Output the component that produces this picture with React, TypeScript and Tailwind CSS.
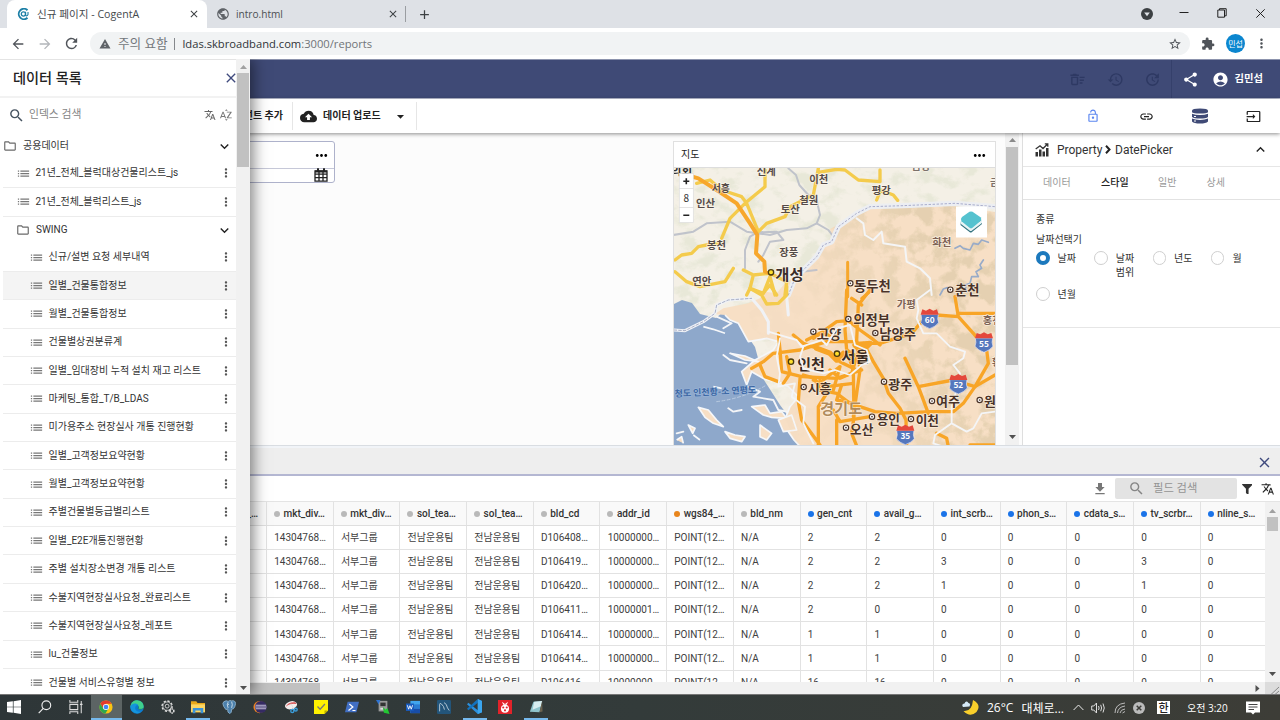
import React from 'react';
import {
  MdArrowBack, MdArrowForward, MdRefresh, MdWarning, MdStarBorder, MdExtension, MdMoreVert, MdPublic, MdClose, MdAdd,
  MdSearch, MdTranslate, MdSortByAlpha, MdList, MdExpandMore, MdExpandLess, MdOutlineFolder, MdCloudUpload, MdArrowDropDown,
  MdOutlineDeleteSweep, MdHistory, MdUpdate, MdShare, MdAccountCircle, MdLink, MdInput, MdMoreHoriz,
  MdGetApp, MdLockOpen,
} from 'react-icons/md';
import { FaFilter } from 'react-icons/fa';

const leaves = [
  '신규/설변 요청 세부내역', '일별_건물통합정보', '월별_건물통합정보', '건물별상권분류계', '일별_임대장비 누적 설치 재고 리스트',
  '마케팅_통합_T/B_LDAS', '미가용주소 현장실사 개통 진행현황', '일별_고객정보요약현황', '월별_고객정보요약현황', '주별건물별등급별리스트',
  '일별_E2E개통진행현황', '주별 설치장소변경 개통 리스트', '수불지역현장실사요청_완료리스트', '수불지역현장실사요청_레포트',
  'lu_건물정보', '건물별 서비스유형별 정보',
];

const columns: [string, string][] = [
  ['mkt_div…', 'g'], ['mkt_div…', 'g'], ['sol_tea…', 'g'], ['sol_tea…', 'g'], ['bld_cd', 'g'], ['addr_id', 'g'], ['wgs84_…', 'o'],
  ['bld_nm', 'g'], ['gen_cnt', 'b'], ['avail_g…', 'b'], ['int_scrb…', 'b'], ['phon_s…', 'b'], ['cdata_s…', 'b'], ['tv_scrbr…', 'b'], ['nline_s…', 'b'],
];
const dot: Record<string, string> = { g: 'bg-[#b9b9b9]', o: 'bg-[#e8851c]', b: 'bg-[#1a73e8]' };

const row = (bld: string, addr: string, ...n: string[]) => ['14304768…', '서부그룹', '전남운용팀', '전남운용팀', bld, addr, 'POINT(12…', 'N/A', ...n];
const rows = [
  row('D106408…', '10000000…', '2', '2', '0', '0', '0', '0', '0'),
  row('D106419…', '10000000…', '2', '2', '3', '0', '0', '3', '0'),
  row('D106420…', '10000000…', '2', '2', '1', '0', '0', '1', '0'),
  row('D106411…', '10000001…', '2', '0', '0', '0', '0', '0', '0'),
  row('D106414…', '10000000…', '1', '1', '0', '0', '0', '0', '0'),
  row('D106414…', '10000000…', '1', '1', '0', '0', '0', '0', '0'),
  row('D106416…', '10000000…', '16', '16', '0', '0', '0', '0', '0'),
];

function Tri({ d, c = 'text-[#505050]' }: { d: 'up' | 'down' | 'right'; c?: string }) {
  const p = { up: 'M0 4 L3.5 0 L7 4Z', down: 'M0 0 H7 L3.5 4Z', right: 'M1.5 0 V7 L5.5 3.5Z' }[d];
  return <svg className={`block shrink-0 ${c}`} width="7" height={d === 'right' ? 7 : 4} viewBox={d === 'right' ? '0 0 7 7' : '0 0 7 4'}><path d={p} fill="currentColor" /></svg>;
}

function Browser() {
  return (
    <div className="shrink-0 font-['Open_Sans','Noto_Sans_CJK_KR',sans-serif]">
      <div className="flex h-7 bg-[#dee1e6]">
        <div className="ml-[7px] flex w-[200px] items-center rounded-t-lg bg-white pl-[10px]">
          <svg width="12" height="12" viewBox="0 0 12 12" fill="none" stroke="#1c7fa6">
            <path d="M10.5 2.2A5.2 5.2 0 1 0 10.5 9.8" strokeWidth="1.9" />
            <circle cx="6.4" cy="6" r="2.1" strokeWidth="1.3" /><path d="M8.6 3.8V7.4Q10 8.6 11 6.5V4" strokeWidth="1.1" />
          </svg>
          <span className="ml-[8px] whitespace-nowrap text-[10.6px] leading-none text-[#45494d]">신규 페이지 - CogentA</span>
          <MdClose className="ml-auto mr-[7px] size-[12px] text-[#3c4043]" />
        </div>
        <div className="flex w-[198px] items-center pl-[9px]">
          <MdPublic className="size-[14px] text-[#5f6368]" />
          <span className="ml-[6px] text-[10.1px] leading-none text-[#4c5054]">intro.html</span>
          <MdClose className="ml-auto mr-[6px] size-[12px] text-[#3c4043]" />
        </div>
        <div className="mt-[6px] h-4 w-px bg-[#9a9da1]" />
        <MdAdd className="ml-[11px] mt-[7px] size-[15px] text-[#3c4043]" />
        <div className="ml-auto flex items-center">
          <svg className="mr-[26px]" width="12" height="12" viewBox="0 0 12 12"><circle cx="6" cy="6" r="6" fill="#3c4043" /><path d="M3.2 4.5H8.8L6 8.3Z" fill="#dee1e6" /></svg>
          <svg className="mr-[28px]" width="10" height="12" viewBox="0 0 10 12"><path d="M.5 4.5H9.5" stroke="#222" /></svg>
          <svg className="-mt-[2px] mr-[29px]" width="10" height="10" viewBox="0 0 10 10" fill="none" stroke="#222"><path d="M.8 2H7.5V9.2H.8ZM2.5 2V.7H9.2V7.8H7.5" /></svg>
          <svg className="-mt-[2px] mr-[15px]" width="9" height="9" viewBox="0 0 9 9"><path d="M.3.3L8.7 8.7M8.7.3L.3 8.7" stroke="#222" /></svg>
        </div>
      </div>
      <div className="flex h-[31px] items-center bg-white">
        <MdArrowBack className="ml-[10px] size-[16px] text-[#50545a]" />
        <MdArrowForward className="ml-[11px] size-[16px] text-[#b3b6ba]" />
        <MdRefresh className="ml-[10px] size-[17px] text-[#50545a]" />
        <div className="ml-[10px] flex h-[23px] w-[1100px] items-center rounded-full bg-[#f1f3f4] pl-[9px]">
          <MdWarning className="size-[12px] text-[#5f6368]" />
          <span className="ml-[7px] mt-[2px] w-[51px] whitespace-nowrap text-[12.6px] leading-none text-[#73777b]">주의 요함</span>
          <div className="ml-[5px] mr-[7.5px] h-3 w-px bg-[#85888c]" />
          <span className="whitespace-nowrap text-[11.2px] leading-none text-[#707478]"><span className="text-[#303338]">ldas.skbroadband.com</span>:3000/reports</span>
          <MdStarBorder className="ml-auto mr-[8px] size-[14px] text-[#50545a]" />
        </div>
        <MdExtension className="ml-[11px] size-[14px] text-[#50545a]" />
        <div className="ml-[11px] flex size-[19px] items-center justify-center rounded-full bg-[#0b86cf] text-[8px] leading-none text-white">민섭</div>
        <MdMoreVert className="ml-[9px] size-[15px] text-[#50545a]" />
      </div>
    </div>
  );
}

function Leaf({ text, indent, active = false }: { text: string; indent: string; active?: boolean }) {
  return (
    <div className={`ml-[3px] flex h-[28.37px] shrink-0 items-center border-b border-[#ececec] ${indent} ${active ? 'bg-[#f4f4f4]' : ''}`}>
      <MdList className="size-[15px] text-[#777]" />
      <span className="ml-[4.5px] whitespace-nowrap text-[10px] leading-none text-[#333]">{text}</span>
      <MdMoreVert className="ml-auto mr-[3px] size-[14px] text-[#555]" />
    </div>
  );
}

function Folder({ text, indent }: { text: string; indent: string }) {
  return (
    <div className={`flex h-[27px] shrink-0 items-center ${indent}`}>
      <MdOutlineFolder className="size-[14px] text-[#6a6a6a]" />
      <span className="ml-[6px] text-[10px] leading-none text-[#333]">{text}</span>
      <MdExpandMore className="ml-auto mr-[3px] size-[17px] text-[#222]" />
    </div>
  );
}

function Drawer() {
  return (
    <aside className="absolute inset-y-0 left-0 z-20 flex w-[250px] bg-white shadow-[3px_0_14px_rgba(0,0,0,0.5)]">
      <div className="flex w-[236px] flex-col overflow-hidden border-t border-[#e4e4e4]">
        <div className="flex h-[38px] shrink-0 items-center border-b-2 border-[#f2f2f2] pl-[13px]">
          <span className="whitespace-nowrap text-[14.2px] font-medium leading-none text-[#222]">데이터 목록</span>
          <MdClose className="-mr-[3px] ml-auto size-[16px] shrink-0 text-[#3f4a7d]" />
        </div>
        <div className="flex h-[34.8px] shrink-0 items-center pl-[8px]">
          <MdSearch className="size-[17px] text-[#45525f]" />
          <span className="ml-[4px] text-[10.8px] leading-none text-[#858585]">인덱스 검색</span>
          <MdTranslate className="ml-auto size-[12px] text-[#666]" />
          <MdSortByAlpha className="ml-[3px] mr-[3px] size-[14px] text-[#777]" />
        </div>
        <Folder text="공용데이터" indent="pl-[3px]" />
        <Leaf text="21년_전체_블럭대상건물리스트_js" indent="pl-[13px]" />
        <Leaf text="21년_전체_블럭리스트_js" indent="pl-[13px]" />
        <Folder text="SWING" indent="pl-[16px]" />
        {leaves.map((t, i) => <Leaf key={t} text={t} indent="pl-[26px]" active={i === 1} />)}
      </div>
      <div className="flex w-[14px] flex-col items-center bg-[#f1f1f1] pb-[4px] pt-[6px]">
        <Tri d="up" c="text-[#a0a0a0]" />
        <div className="mt-[4px] h-[94px] w-[12px] bg-[#c1c1c1]" />
        <div className="mt-auto"><Tri d="down" /></div>
      </div>
    </aside>
  );
}

function Shield({ x, y, n }: { x: number; y: number; n: string }) {
  return (
    <g transform={`translate(${x} ${y})`}>
      <path d="M-26 -10H26Q22 4 27 15Q18 27 0 33Q-18 27 -27 15Q-22 4 -26 -10Z" fill="#5577bd" stroke="#e8e8f4" strokeWidth="2" />
      <path d="M-27 -9L-22 -25L-11 -21L0 -27L11 -21L22 -25L27 -9Z" fill="#e4483c" />
      <text x="0" y="16" textAnchor="middle" fontSize="25" fill="#fff" fontWeight="600">{n}</text>
    </g>
  );
}

const upperLabels: [number, number, string, number, string][] = [
  [2, 121, '의회', 35, '#333'], [260, 120, '신계', 31, '#554b48'], [125, 171, '서흥', 30, '#554b48'], [78, 216, '인산', 31, '#554b48'],
  [418, 143, '이천', 31, '#554b48'], [388, 207, '철원', 31, '#554b48'], [332, 235, '토산', 31, '#554b48'], [605, 177, '평강', 31, '#554b48'],
  [725, 104, '금성', 30, '#7b716b'], [960, 152, '금강', 30, '#7b716b'], [111, 343, '봉천', 31, '#554b48'], [328, 364, '장풍', 31, '#554b48'],
  [67, 450, '연안', 31, '#554b48'], [787, 333, '화천', 31, '#7d6255'], [316, 436, '개성', 46, '#3a2e2a'],
  [552, 468, '동두천', 40, '#4a3328'], [855, 481, '춘천', 40, '#4a3328'],
];
const lowerLabels: [number, number, string, number, string][] = [
  [680, 53, '가평', 31, '#7d6255'], [550, 105, '의정부', 40, '#4a3328'], [440, 148, '고양', 40, '#4a3328'], [628, 147, '남양주', 40, '#4a3328'],
  [514, 215, '서울', 46, '#3a2a22'], [382, 239, '인천', 45, '#3a2a22'], [413, 309, '시흥', 39, '#4a3328'], [655, 297, '광주', 39, '#4a3328'],
  [798, 349, '여주', 39, '#4a3328'], [942, 349, '원주', 39, '#4a3328'], [450, 371, '경기도', 46, '#b08a5c'], [620, 401, '용인', 38, '#4a3328'],
  [737, 405, '이천', 38, '#4a3328'], [540, 432, '오산', 38, '#4a3328'], [938, 102, '홍천', 31, '#7d6255'], [965, 228, '횡성', 31, '#7d6255'],
];
const towns = [[535, 87], [430, 125], [616, 129], [401, 291], [642, 275], [786, 333], [929, 330], [606, 380], [723, 387], [528, 413], [541, -20], [841, -1]];

function MapView() {
  const label = ([x, y, t, s, c]: [number, number, string, number, string]) => (
    <text key={t + x} x={x} y={y} fontSize={s} fill={c} stroke="#fff8ee" strokeWidth="4" strokeOpacity=".7" paintOrder="stroke" fontWeight="600">{t}</text>
  );
  return (
    <svg className="block h-[277px] w-[321px] font-['Noto_Sans_CJK_KR',sans-serif]" viewBox="674 168 321 277">
      <defs>
        <filter id="hillN" x="0" y="0" width="100%" height="100%"><feTurbulence type="fractalNoise" baseFrequency=".05 .07" numOctaves="5" seed="7" /><feColorMatrix values="0 0 0 0 .78  0 0 0 0 .79  0 0 0 0 .66  4.6 3 0 0 -3.75" /></filter>
        <filter id="hillS" x="0" y="0" width="100%" height="100%"><feTurbulence type="fractalNoise" baseFrequency=".06 .06" numOctaves="5" seed="3" /><feColorMatrix values="0 0 0 0 .76  0 0 0 0 .62  0 0 0 0 .42  4.6 3.4 0 0 -3.65" /></filter>
        <linearGradient id="fade" x1="0" x2="1" y1=".3" y2="0"><stop offset=".3" stopColor="#fff" stopOpacity=".08" /><stop offset=".7" stopColor="#fff" stopOpacity=".85" /></linearGradient>
        <mask id="east"><rect x="674" y="168" width="322" height="277" fill="url(#fade)" /></mask>
        <clipPath id="south"><path d="M791 277L798 284L808 274L812 262L822 249L831 237L830 229L842 222L855 212L865 207L905 206L950 205L996 212V445H796L788 425L777 405L787 380L778 365L760 335L740 318L760 305Z" /></clipPath>
      </defs>
      <rect x="674" y="168" width="322" height="277" fill="#f4f0e6" />
      <rect x="674" y="168" width="322" height="277" filter="url(#hillN)" opacity=".75" />
      <path d="M674 304L682 300L692 303L700 314L716 318L724 311L740 325L755 347L764 380L780 405L800 432V445H674Z" fill="#8ea8cb" />
      <g transform="translate(670 290) scale(.33333)" fill="#f7dfc5" stroke="#f5f7fa" strokeWidth="5" strokeLinejoin="round">
        <path stroke="none" d="M135 72L160 55L235 40L270 25L285 5L320 10L345 -20L380 -45L440 -100L470 -60L560 -230L700 -250L990 -180V480H400L372 450L355 425L340 400L360 350L385 320L355 290L325 275L285 268L245 245L230 285L215 245L255 210L310 180L325 155L290 145L235 155L205 100L180 90L165 75Z" />
        <path fill="none" d="M400 480L372 450L355 425L340 400L360 350L385 320L355 290L325 275L285 268L245 245L230 285L215 245L255 210L310 180L325 155L290 145L235 155L205 100L180 90L165 75" />
        <path d="M85 352L115 360L140 390L160 410L130 400L105 382Z" /><path d="M180 190L225 198L265 215L225 210Z" />
        <path d="M245 350L285 345L300 370L335 365L350 385L305 382L280 375Z" /><path d="M325 390L365 375L380 420L340 425Z" />
        <path d="M165 425L195 435L225 440L215 455L180 445Z" /><path d="M55 405L75 415L68 430Z M70 435L90 450 M100 110L130 118L165 130 M20 450L35 440L40 460 M130 290L155 295 M270 405L305 430L290 450L270 440Z" />
      </g>
      <g clipPath="url(#south)">
        <path d="M791 277L798 284L808 274L812 262L822 249L831 237L830 229L842 222L855 212L865 207L905 206L950 205L996 212V445H830L800 330Z" fill="#f7dfc5" />
        <g mask="url(#east)"><rect x="674" y="168" width="322" height="277" filter="url(#hillS)" /></g>
      </g>
      <g transform="translate(670 135) scale(.33333)" fill="none" strokeLinecap="round" strokeLinejoin="round">
        <g stroke="#bbbfc9" strokeWidth="6" opacity=".9">
          <path d="M355 100L378 120L388 150L415 180L440 195L450 240L440 265L475 285L490 305" />
          <path d="M10 300L70 290L110 265L180 260L230 290L300 300L350 285L410 280L440 265" />
          <path d="M225 400V345L240 305L262 292L320 290L340 315L300 320L280 360L265 380M370 430L395 410L440 405" />
        </g>
        <path d="M355 480L375 430L440 365L460 330L485 320L505 275L560 235L600 215L700 212L855 205L975 215" stroke="#eceef2" strokeWidth="16" />
        <path d="M355 480L375 430L440 365L460 330L485 320L505 275L560 235L600 215L700 212L855 205L975 215" stroke="#9ba0c4" strokeWidth="2.5" strokeDasharray="5 7" />
        <path stroke="#f4cb4c" strokeWidth="10" d="M80 145L120 135L155 165L215 185L230 205L265 290L290 265L345 245L360 215L430 180L445 100M155 310L180 250L225 205L285 155V105M15 375L35 360L65 355L85 335L110 330L150 325M15 410L50 440L90 455L165 440L190 400M445 112L500 103L525 105L565 135L630 140V105M620 195L632 165L670 180L683 196M220 405L250 420L300 415L350 440L345 480M250 420L240 460L280 475L300 425L315 480" />
        <path d="M60 123L85 130L140 165L200 205L240 265L262 300L258 355L283 380L285 410L305 416" stroke="#f7a72c" strokeWidth="12" />
        <path d="M533 382V485M600 470L575 490" stroke="#f7a72c" strokeWidth="9" />
        <path d="M560 250L580 265L585 300L610 315L635 290L640 325L705 335L710 380L750 400L780 430L785 480" stroke="#f4f5f6" strokeWidth="6" />
        <path d="M855 340L870 332L880 340L900 345L910 325L925 328L935 315L955 322M810 480L820 462L832 458M940 375L930 390L935 400L918 410L925 425L905 425L900 445L885 450L890 470" stroke="#98abc8" strokeWidth="5" />
      </g>
      <g transform="translate(670 290) scale(.33333)" fill="none" strokeLinecap="round" strokeLinejoin="round">
        <path d="M12 120L45 122L100 95L135 70L140 45L175 30L245 25L275 60L295 95V130M350 20L355 75" stroke="#f0f2f6" strokeWidth="9" />
        <path d="M12 120L45 122L100 95L135 70L140 45L175 30L245 25" stroke="#858eae" strokeWidth="2" strokeDasharray="8 6" />
        <path d="M240 -5L275 15L290 42L325 40L350 15L350 -10M275 15L300 -15L320 15M240 -5L230 15" stroke="#f4cb4c" strokeWidth="10" />
        <g stroke="#f8a527" strokeWidth="10">
          <path d="M530 0L525 120L530 180L550 240L552 380L545 430L565 480M600 0L565 45L560 150L570 240L550 380M545 25L575 45M430 145L500 95L535 92L570 120L605 145L630 165" />
          <path d="M325 130L330 180L335 245L395 260L500 265L575 240M370 135L400 160L470 185L510 215L560 240M245 235L280 215L310 190L390 180L470 155L560 155" />
          <path d="M270 225L285 260L325 275M390 265L385 335L395 390L450 465M450 270L470 310L445 350V475M400 255L435 265L450 300L500 310L540 340L615 365L680 370L780 365L850 365L880 340L915 290L975 255" />
          <path d="M460 270L510 230L490 300M515 285L500 330L550 340M580 160L610 215L640 265L655 310L690 355L708 390L710 470M705 205L745 290L775 370M745 290L850 270L915 290L955 220L950 180L910 130L865 80L855 20M865 70L975 70M865 80L800 75L755 95L725 130L630 160L560 160M480 240L510 265L545 250L560 200L530 180" />
          <path d="M350 200L360 250L340 280M410 150L450 130L500 140M500 390V475M490 360L510 395L600 380M800 430L830 445L835 470M900 465H975M430 270L470 290L550 280" />
        </g>
        <path d="M440 175L480 190L500 210L520 190M555 165L600 160L575 185Z" stroke="#f8a527" strokeWidth="16" />
        <g stroke="#f4f5f7" strokeWidth="5.5">
          <path d="M780 0L740 30L745 60L740 85L760 130L800 130L840 170L885 185L880 205L850 225L870 250L860 300L845 350L845 400L890 425L910 415L935 370L975 365M845 400L795 435L790 460L820 470" />
          <path d="M330 145L320 200L330 250L325 290L375 280L365 320L405 350L400 400L430 460M235 290L270 305L250 320L310 330L325 360L350 365M140 80L185 100L160 115M160 195L180 210L230 220M175 355L190 365L215 360M20 430L40 425" />
        </g>
        <path d="M140 335Q220 325 290 285" stroke="#b8c9df" strokeWidth="3" strokeDasharray="9 7" />
      </g>
      <g transform="translate(670 135) scale(.33333)">{upperLabels.map(label)}
        <circle cx="303" cy="412" r="8" fill="#ffdf2e" stroke="#4a3b10" strokeWidth="4" />
      </g>
      <g transform="translate(670 290) scale(.33333)">
        {lowerLabels.map(label)}
        {towns.map(([x, y]) => <g key={`${x}-${y}`}><circle cx={x} cy={y} r="8" fill="#fff" stroke="#4a3328" strokeWidth="3.5" /><circle cx={x} cy={y} r="2.5" fill="#4a3328" /></g>)}
        {[[501, 191], [363, 215]].map(([x, y]) => <circle key={x} cx={x} cy={y} r="8" fill="#ffdf2e" stroke="#4a3b10" strokeWidth="4" />)}
        <path d="M295 125L345 140L380 150L395 170L455 150L470 165L500 115L540 105L555 165L590 180L600 215L575 225L540 255L495 240L460 250L400 235L390 200L400 170" fill="none" stroke="#f4f5f7" strokeWidth="5.5" strokeLinejoin="round" />
        <text fontSize="27" fill="#3d68a4" fontWeight="600" stroke="#9db9dc" strokeWidth="3" paintOrder="stroke" transform="translate(14 321) rotate(-3)">청도 인천항-소 연평도</text>
        <Shield x={779} y={83} n="60" /><Shield x={942} y={154} n="55" /><Shield x={865} y={279} n="52" /><Shield x={706} y={431} n="35" />
      </g>
      <g>
        <g fill="#fff" stroke="#ddd" strokeWidth=".7"><rect x="679.3" y="173.500" width="14" height="15" /><rect x="679.3" y="188.500" width="14" height="19" /><rect x="679.3" y="207.500" width="14" height="15" /></g>
        <path d="M683.3 181.2H689.3M686.3 178.2V184.2M683.3 215.2H689.3" stroke="#222" strokeWidth="1.6" />
        <text x="686.3" y="201.500" textAnchor="middle" fontSize="10" fill="#333">8</text>
        <rect x="956" y="206.500" width="31" height="31" fill="#fff" />
        <path d="M961 221L970 215L982 221V224L972 232Q970.800 233 969.500 232L960.500 225Z" fill="#35737f" />
        <path d="M961 219.500L970 227L982 220V223L972 230.500Q970.800 231.500 969.500 230.500L961 224Z" fill="#e8f4f5" />
        <path d="M962 217L969.500 211.800Q971 211 972.500 211.800L980.500 217.200Q982.200 219 980.500 221L972.500 227.800Q971 228.800 969.500 227.800L961.500 221.200Q960 219 962 217Z" fill="#55c2cf" />
      </g>
    </svg>
  );
}

function Radio({ on = false, children }: { on?: boolean; children: React.ReactNode }) {
  return (
    <div className="flex w-[58.3px] items-start">
      <div className={`size-[13.5px] shrink-0 rounded-full border ${on ? 'border-[4px] border-[#1c79bd] bg-white' : 'border-[#cfcfcf]'}`} />
      <span className="ml-[8px] mt-px text-[10px] leading-[14px] text-[#333]">{children}</span>
    </div>
  );
}

function Property() {
  return (
    <aside className="flex w-[258px] flex-col border-l border-[#dedede] bg-white">
      <div className="flex h-[34px] items-center border-b border-[#e6e6e6] pl-[12px] text-[12px] leading-none text-[#333]">
        <svg width="14" height="14" viewBox="0 0 14 14" fill="#333"><path d="M.5 9H3V13.5H.5ZM4 6.5H6.5V13.5H4ZM7.5 8.5H10V13.5H7.5ZM11 5H13.5V13.5H11Z" /><path d="M.7 6L5 2.8L8 5.5L12.3 1.2M9.8 .9H12.8V3.8" fill="none" stroke="#333" strokeWidth="1.3" /></svg>
        <span className="ml-[8px] w-[44px]">Property</span>
        <svg className="mx-[4px]" width="6" height="9" viewBox="0 0 6 9"><path d="M1 .8L4.500 4.500L1 8.200" fill="none" stroke="#222" strokeWidth="2" /></svg>
        <span>DatePicker</span>
        <MdExpandLess className="ml-auto mr-[11px] size-[17px] text-[#222]" />
      </div>
      <div className="flex h-[32.5px] items-center border-b border-[#e2e2e2] pl-[20px] text-[10px] leading-none text-[#999]">
        <span className="w-[58px]">데이터</span><span className="w-[57px] font-medium text-[#222]">스타일</span><span className="w-[48.5px]">일반</span><span>상세</span>
      </div>
      <div className="flex h-[128.5px] flex-col border-b border-[#e6e6e6] pl-[13px] text-[10px] text-[#333]">
        <span className="mt-[15.500px] leading-[10px]">종류</span>
        <span className="mt-[10px] leading-[10px]">날짜선택기</span>
        <div className="mt-[6px] flex flex-wrap gap-y-[7px]">
          <Radio on>날짜</Radio><Radio>날짜<br />범위</Radio><Radio>년도</Radio><Radio>월</Radio><Radio>년월</Radio>
        </div>
      </div>
    </aside>
  );
}

function Workspace() {
  return (
    <div className="flex h-[312px] shrink-0">
      <div className="flex flex-1 items-start bg-[#fcfcfc] pt-[8px]">
        <div className="ml-[150px] h-[42px] w-[184.5px] rounded-[3px] border border-[#aeb2cb] bg-white">
          <div className="flex h-[27px] items-center border-b border-[#c6c8d8]"><MdMoreHoriz className="ml-auto mr-[4px] size-[17px] text-black" /></div>
          <svg className="-mt-[1px] ml-auto mr-[6px] block" width="14" height="14" viewBox="0 0 14 14"><path d="M1 3H13V13.200H1ZM1 6.200H13M1 9.700H13M5 4V13M9 4V13" fill="none" stroke="#222" strokeWidth="1.300" /><path d="M1 2.500H13V4.500H1Z" fill="#222" /><path d="M4 .3V4M10 .3V4" stroke="#222" strokeWidth="2" /></svg>
        </div>
        <div className="ml-[338.5px] w-[323px] border border-[#e0e0e0] bg-white">
          <div className="flex h-[26px] items-center border-b border-[#ddd] pl-[7px] pt-px text-[10px] leading-none text-[#222]">지도<MdMoreHoriz className="ml-auto mr-[7px] size-[17px] text-black" /></div>
          <MapView />
        </div>
        <div className="-mt-[8px] ml-auto mr-[3px] flex h-[312px] w-[14px] flex-col items-center bg-[#f1f1f1] pb-[6px] pt-[5px]">
          <Tri d="up" c="text-[#8a8a8a]" />
          <div className="mt-[5px] h-[218px] w-[12px] bg-[#c1c1c1]" />
          <div className="mt-auto"><Tri d="down" /></div>
        </div>
      </div>
      <Property />
    </div>
  );
}

function DataPanel() {
  return (
    <section className="flex flex-1 flex-col overflow-hidden border-t border-[#d9dde2]">
      <div className="flex h-[30px] shrink-0 items-center border-b-2 border-t-2 border-b-[#b4b7d2] border-t-[#f1f4f8] bg-[#eee]">
        <MdClose className="ml-auto mr-[7px] mt-[3px] size-[17px] text-[#3f4a7d]" />
      </div>
      <div className="flex h-[25.5px] shrink-0 items-center border-b border-[#e4e4e4] bg-white pt-px">
        <MdGetApp className="ml-auto size-[16px] text-[#777]" />
        <div className="ml-[7px] flex h-[21px] w-[121.5px] items-center rounded-[2px] bg-[#e3e3e3] pl-[13px]">
          <MdSearch className="size-[17px] text-[#858585]" /><span className="ml-[8px] text-[11.3px] leading-none text-[#949494]">필드 검색</span>
        </div>
        <FaFilter className="ml-[5px] size-[10.5px] text-[#333]" />
        <MdTranslate className="ml-[9px] mr-[5.500px] size-[13.500px] text-[#222]" />
      </div>
      <div className="flex h-[180px] shrink-0">
        <div className="w-[1265px] overflow-hidden">
          <div className="flex h-[24.5px] border-b border-[#dfdfdf] bg-[#f9f9f9]">
            <div className="flex w-[267px] shrink-0 items-center justify-end border-r border-[#e2e2e2] pr-[8px] text-[10px] font-medium text-[#333]">_…</div>
            {columns.map(([name, kind], i) => (
              <div key={i} className="flex w-[66.7px] shrink-0 items-center border-r border-[#e2e2e2] pl-[7px] pt-px text-[10px] font-medium leading-none text-[#333]">
                <span className={`mr-[3.5px] size-[6px] rounded-full ${dot[kind]}`} />{name}
              </div>
            ))}
          </div>
          {rows.map((r, i) => (
            <div key={i} className="flex h-[24.1px] border-b border-[#e2e2e2] bg-white">
              <div className="w-[267px] shrink-0 border-r border-[#e2e2e2]" />
              {r.map((v, j) => <div key={j} className="flex w-[66.7px] shrink-0 items-center whitespace-nowrap border-r border-[#e2e2e2] pl-[7.2px] pt-[1.2px] text-[10px] leading-none text-[#404040]">{v}</div>)}
            </div>
          ))}
        </div>
        <div className="flex w-[15px] flex-col items-center bg-[#f1f1f1] pb-[6px] pt-[7px]">
          <Tri d="up" c="text-[#a0a0a0]" />
          <div className="mt-[4px] h-[14px] w-[11px] bg-[#c1c1c1]" />
          <div className="mt-auto"><Tri d="down" /></div>
        </div>
      </div>
      <div className="flex flex-1 items-center border-b border-[#aaa] bg-[#f1f1f1]">
        <div className="h-[11px] w-[319.5px] bg-[#c1c1c1]" />
        <div className="ml-auto mr-[4px]"><Tri d="right" /></div>
        <svg className="h-full w-[15px] bg-[#dcdcdc]" viewBox="0 0 15 13"><path d="M6 12.5L14 5M10 12.5L14 9" stroke="#888" /></svg>
      </div>
    </section>
  );
}

function AppBar() {
  return (
    <>
      <header className="flex h-[40px] shrink-0 items-center border-b border-t border-b-[#b9bed0] border-t-[#8c93ad] bg-[#3f4a76]">
        <MdOutlineDeleteSweep className="ml-auto mr-[21px] size-[17px] text-[#2e3963]" />
        <MdHistory className="mr-[20px] size-[17px] text-[#2e3963]" />
        <MdUpdate className="mr-[10px] size-[17px] text-[#2e3963]" />
        <div className="h-full w-px bg-[#35406b]" />
        <MdShare className="ml-[10px] size-[17px] text-white" />
        <MdAccountCircle className="ml-[13px] size-[17px] text-white" />
        <span className="ml-[6px] mr-[17px] whitespace-nowrap text-[10.3px] font-bold leading-none text-white">김민섭</span>
      </header>
      <div className="z-10 flex h-[34px] shrink-0 items-center bg-white pl-[213px] text-[10px] font-semibold leading-none text-[#222] shadow-[0_1px_4px_rgba(0,0,0,0.45)]">
        <span className="w-[70px] whitespace-nowrap text-right">컴포넌트 추가</span>
        <div className="ml-[9px] h-[28px] w-px bg-[#e6e6e6]" />
        <MdCloudUpload className="ml-[7px] size-[17px]" />
        <span className="ml-[6px]">데이터 업로드</span>
        <MdArrowDropDown className="ml-[11px] size-[17px]" />
        <div className="ml-[7px] h-[28px] w-px bg-[#e6e6e6]" />
        <div className="ml-auto flex">
          {[
            <MdLockOpen className="size-[14px] text-[#5b86f0]" />, <MdLink className="size-[15px] text-[#222]" />,
            <svg width="16" height="16" viewBox="0 0 16 16" fill="#3f4a76"><path d="M0 2.7Q0 .5 8 .5T16 2.7V4.2Q15 5.5 8 5.5T0 4.2ZM0 5.8Q3 7 8 7T16 5.8V9Q14 10.5 8 10.5T0 9ZM0 10.6Q3 12 8 12T16 10.6V13.5Q14 15.5 8 15.5T0 13.5Z" /><path d="M2 8.5H4M2 13H4" stroke="#fff" /></svg>,
            <MdInput className="size-[15px] text-[#222]" />,
          ].map((el, i) => <div key={i} className="flex w-[53.3px] items-center justify-center">{el}</div>)}
        </div>
      </div>
    </>
  );
}

const W = ({ children, s = 14 }: { children: React.ReactNode; s?: number }) => <svg width={s} height={s} viewBox="0 0 16 16" fill="none">{children}</svg>;

const tasks: { icon: React.ReactNode; state?: 'on' | 'run' }[] = [
  { icon: <W><path d="M0 2.3L6.7 1.4V7.6H0ZM7.5 1.3L16 0V7.6H7.5ZM0 8.4H6.7V14.6L0 13.7ZM7.5 8.4H16V16L7.5 14.7Z" fill="#fff" /></W> },
  { icon: <W><circle cx="9.5" cy="6" r="5" stroke="#eee" strokeWidth="1.3" /><path d="M6 9.5L.8 15" stroke="#eee" strokeWidth="1.3" /></W> },
  { icon: <W><path d="M1 5H10V11H1ZM1 0V2.5H10V0M1 16V13.5H10V16M14 1V15M12.5 5H15.5" stroke="#ddd" strokeWidth="1.2" /></W> },
  { state: 'on', icon: <W><circle cx="8" cy="8" r="7.5" fill="#f9c513" /><path d="M1.5 4.2A7.5 7.5 0 0 1 14.5 4.4H8L4.8 9.8Z" fill="#e33b2e" /><path d="M1.5 4.2A7.5 7.5 0 0 0 7.3 15.5L11 9.5 4.8 9.8Z" fill="#2da94f" /><circle cx="8" cy="8" r="3.5" fill="#fff" /><circle cx="8" cy="8" r="2.7" fill="#4285f4" /></W> },
  { icon: <W><circle cx="8" cy="8" r="7.7" fill="#0c7bd0" /><path d="M.5 8C1 2 6 0 9 .5C14 1 16 5 15.6 8.5C15 11 11 11 9.5 10C11 8 9.5 5.5 7 5.5C4 5.5 1 7 .5 8Z" fill="#3fd08c" /><path d="M.4 8C1 3.5 7 2.5 10 6C8 5 5.5 7 6 10C6.5 13 10 14 13 13C9 17 1 15 .4 8Z" fill="#1595dc" /><path d="M9.7 7.5C10 9 9 9.5 9.5 10C11 11 14.5 11 15.6 8.8" stroke="#263" strokeWidth=".5" /></W> },
  { icon: <W><circle cx="7" cy="7" r="5.8" stroke="#ddd" strokeWidth="1.6" strokeDasharray="2.6 1.9" /><circle cx="7" cy="7" r="4.800" stroke="#ddd" strokeWidth=".9" /><circle cx="7" cy="7" r="2.2" stroke="#ddd" /><circle cx="12.5" cy="12.5" r="2.2" stroke="#ddd" strokeWidth="1.8" strokeDasharray="1.5 .7" /></W> },
  { state: 'run', icon: <W><path d="M0 1.5H6L7.5 3.5H16V14H0Z" fill="#e9a91b" /><path d="M0 5H16V14H0Z" fill="#fcd663" /><path d="M2 9H14V15H11V12H5V15H2Z" fill="#3b93d9" /></W> },
  { icon: <W><path d="M2 2Q5 0 7 1.5Q9 0 11 1Q15 0 15.5 4Q15 8 13 10L11 10.5Q11 15 9 15.5Q6 15 6.5 10L4.5 11Q1 7 1 4Z" fill="#4b80ac" stroke="#8fb3ce" /><path d="M7 2.5Q5 5 7 9M11 2Q12.5 5 11 9M6.5 5H8" stroke="#e4eef5" strokeWidth=".9" /></W> },
  { icon: <W><circle cx="7.5" cy="8" r="7" fill="#ee8322" /><circle cx="9" cy="8" r="6.8" fill="#352b63" /><path d="M3 6H15M2.5 8H15.5M3 10H15" stroke="#d8d5ea" strokeWidth="1" /></W> },
  { icon: <W><ellipse cx="8" cy="6" rx="7" ry="4.5" fill="#f3eded" transform="rotate(-15 8 6)" /><path d="M2 8Q4 2 13 2.5L14 4.5Q6 3.5 2 8Z" fill="#d44b4b" /><path d="M8 4L12 12M14 7L9 11" stroke="#ddd" /><circle cx="9.5" cy="12.5" r="1.8" stroke="#3b9dda" strokeWidth="1.5" /><circle cx="13.5" cy="11" r="1.6" stroke="#3b9dda" strokeWidth="1.5" /></W> },
  { icon: <W><path d="M0 0H16V12L12 16H0Z" fill="#fff100" /><path d="M12 16V12H16Z" fill="#b7a900" /><path d="M4 7.5L7 10.5L12.5 4.5" stroke="#777" strokeWidth="1.5" /></W> },
  { icon: <W><path d="M3 2H16L13 14H0Z" fill="#416fc4" /><path d="M5 4.5L9 8L4 12M8.5 12H12" stroke="#fff" strokeWidth="1.4" /></W> },
  { icon: <W><path d="M3 1H13V13H3Z" fill="#999" /><path d="M5 3H11V7H5Z" fill="#333" /><path d="M0 0H5L3 5Z" fill="#2f73d0" /><path d="M8 8L11 11L13 9L15.5 16L9 14.5Z" fill="#23c733" /><path d="M5 10H8" stroke="#ddd" strokeWidth="2" /></W> },
  { icon: <W><path d="M5 1H16V15H5Z" fill="#41a5ee" /><path d="M5 5H16V10H5Z" fill="#2b7cd3" /><path d="M5 10H16V15H5Z" fill="#184da8" /><path d="M0 4H9V12.5H0Z" fill="#185abd" /><path d="M1.5 6L3 10.5L4.5 6.5L6 10.5L7.5 6" stroke="#fff" /></W> },
  { icon: <W><rect width="16" height="16" rx="1.5" fill="#23557a" /><path d="M3 13V5Q3 3 5 4.5Q8 7 8.5 11M8 3Q11 4 12 9L14 12" stroke="#b5c9d6" strokeWidth="1.1" /></W> },
  { state: 'run', icon: <W s={15}><path d="M11.5 0L16 2V14L11.5 16L0 5.5L1.5 4L11.5 12Z" fill="#2b8fdd" /><path d="M11.5 0L0 10.5L1.5 12L11.5 4Z" fill="#1372bd" /><path d="M11.5 0L16 2V14L11.5 16Z" fill="#3aa5ee" /></W> },
  { icon: <W><path d="M0 0H16V16H0Z" fill="#e2232a" /><path d="M4.500 2L8 4.500L11.500 2L10 5.500H6Z" fill="#fff" /><circle cx="8" cy="10" r="4.600" fill="#fff" /><circle cx="6" cy="8.500" r="1.200" fill="#e2232a" /><circle cx="10" cy="8.500" r="1.200" fill="#e2232a" /><circle cx="8" cy="11.800" r="1.200" fill="#e2232a" /></W> },
  { state: 'run', icon: <W><path d="M5 2L15 1L12 14L1 13.5Z" fill="#8fc4cc" /><path d="M6 2L15 1L13.5 7L4 11Z" fill="#d8edf0" /><path d="M12 14L15 1L15.5 13Z" fill="#6b6250" /></W> },
];

function Taskbar() {
  return (
    <footer className="z-30 flex h-[26px] shrink-0 items-center border-t border-[#777] bg-gradient-to-r from-[#2e3638] via-[#333b3a] to-[#3d3d37] font-['Open_Sans','Noto_Sans_CJK_KR',sans-serif] text-white">
      <div className="-ml-px flex h-full">
        {tasks.map((t, i) => (
          <div key={i} className={`flex h-full w-[30.7px] items-center justify-center border-b-2 ${t.state === 'on' ? 'border-[#76b9ed] bg-[#5c6464]' : 'border-transparent'}`}>
            <div className={`mt-[2px] flex h-[25px] w-[24px] shrink-0 items-center justify-center border-b-2 ${t.state === 'run' ? 'border-[#76b9ed]' : 'border-transparent'}`}>{t.icon}</div>
          </div>
        ))}
      </div>
      <div className="ml-auto flex items-center">
        <svg width="17" height="16" viewBox="0 0 17 16"><path d="M11 0Q20 5 14.5 12Q8 18 1.5 11Q10 12 11 0Z" fill="#f9cf2b" /><path d="M1 7Q-1 4 2.5 3.5Q4 0 6.5 3Q9 3.5 7.5 6.5Z" fill="#d5e9f6" /></svg>
        <span className="ml-[8px] whitespace-nowrap text-[12px] leading-none">26°C</span>
        <span className="ml-[8px] mt-[2px] whitespace-nowrap text-[12px] leading-none">대체로...</span>
        <svg className="ml-[9px]" width="11" height="7" viewBox="0 0 11 7"><path d="M.6 6L5.5 1L10.4 6" fill="none" stroke="#eee" /></svg>
        <svg className="ml-[7px]" width="15" height="12" viewBox="0 0 15 12" fill="none" stroke="#ddd"><path d="M.7 4H2.8L5.5 1V11L2.8 8H.7ZM7.5 4Q8.7 6 7.5 8M9.7 2.8Q11.5 6 9.7 9.2M12 1.5Q14.5 6 12 10.5" /></svg>
        <svg className="ml-[8px]" width="12" height="12" viewBox="0 0 12 12" fill="none" stroke="#bbb"><path d="M1 11Q1 2 11 1M3.5 11Q4 5 11 4M6 11Q6.5 7.5 11 7M8.5 11L11 9.5" /></svg>
        <svg className="ml-[7px]" width="12" height="12" viewBox="0 0 12 12"><circle cx="6" cy="6" r="6" fill="#bbb" /><path d="M3.7 3.7L8.3 8.3M8.3 3.7L3.7 8.3" stroke="#3b3b37" strokeWidth="1.5" /></svg>
        <span className="ml-[12px] flex size-[13px] items-center justify-center bg-white text-[11px] font-medium leading-none text-[#222]">한</span>
        <span className="ml-[17px] w-[42px] whitespace-nowrap text-[10px] leading-none">오전 3:20</span>
        <svg className="ml-[17px] mr-[20px]" width="14" height="14" viewBox="0 0 14 14"><path d="M0 .5H14V11.5H9L7 13.5L5 11.5H0Z" fill="#fff" /><path d="M2.5 3.5H11.5M2.5 6H11.5M2.5 8.5H8" stroke="#444" /></svg>
      </div>
    </footer>
  );
}

export default function App() {
  return (
    <div className="flex h-[720px] w-[1280px] flex-col overflow-hidden bg-white font-['Roboto','Noto_Sans_CJK_KR',sans-serif]">
      <Browser />
      <main className="relative flex h-[635px] shrink-0 flex-col overflow-hidden">
        <AppBar />
        <Workspace />
        <DataPanel />
        <Drawer />
      </main>
      <Taskbar />
    </div>
  );
}
